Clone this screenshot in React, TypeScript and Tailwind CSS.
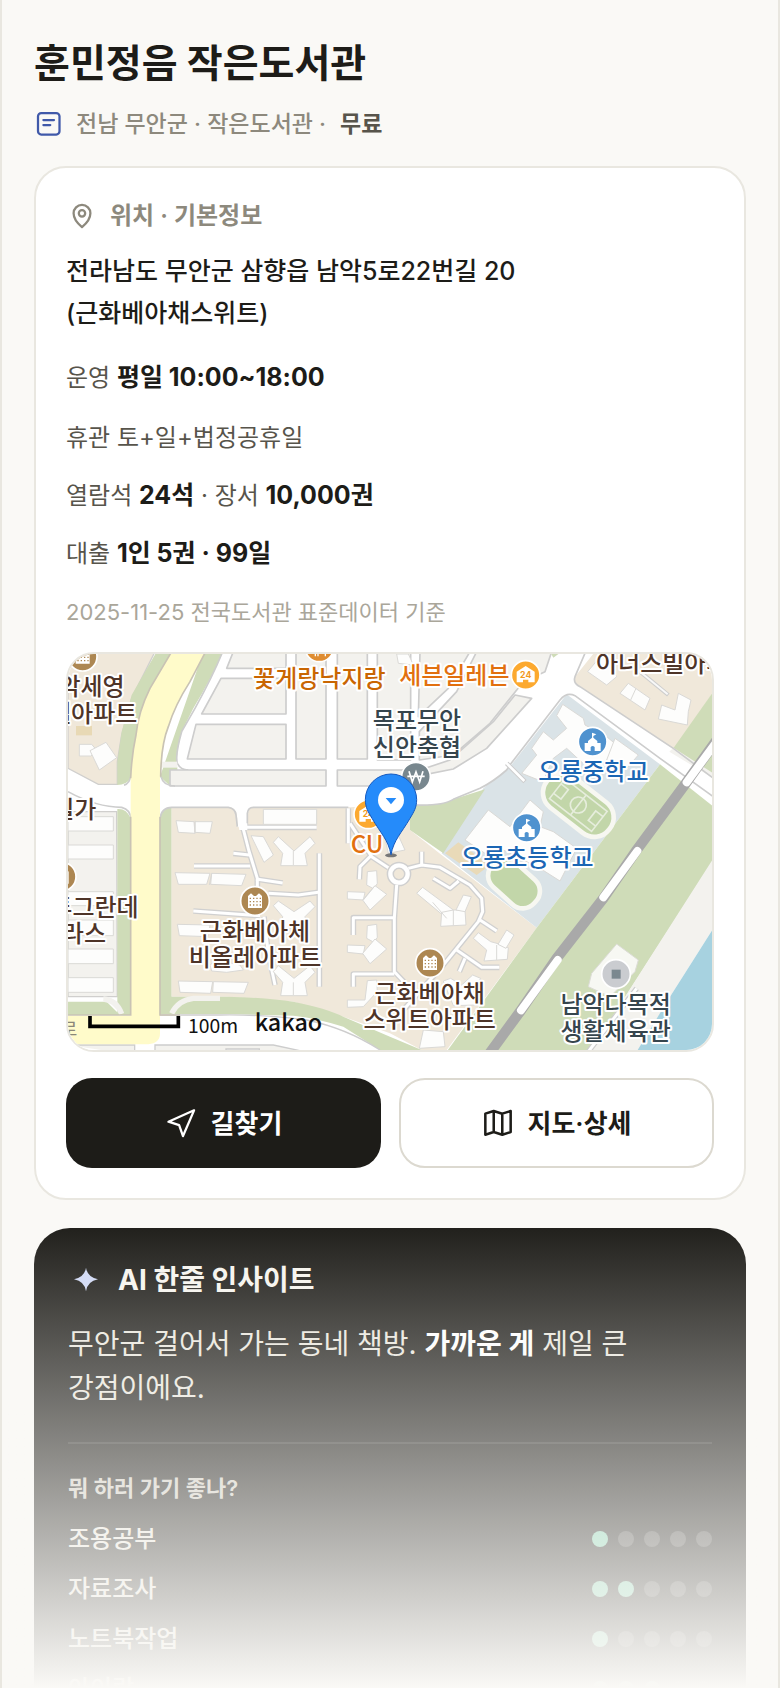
import React from "react";

type XY = { x: number; y: number };

const BLOCKS = [
  "520,20 678,20 678,70 500,70",
  "483,100 678,100 678,207 425,207",
  "408,238 678,238 678,342 382,342",
  "708,20 798,20 798,342 708,342",
  "832,20 922,20 922,342 832,342",
  "952,20 1052,20 1052,345 952,345",
  "1080,20 1230,20 1165,130 1075,215",
  "1250,20 1475,20 1455,80 1390,110 1290,235 1180,330 1078,345 1078,260 1190,140",
  "330,375 798,375 798,423 330,423",
  "832,375 1080,375 1170,345 1300,230 1365,150 1415,160 1280,310 1180,372 1080,392 1050,423 832,423",
];

const PATHS = [
  "540,547 770,547",
  "548,545 566,615 592,700 592,740",
  "520,625 568,630",
  "402,663 570,663",
  "588,702 668,714",
  "625,745 715,750 775,742",
  "778,625 778,1025",
  "400,798 600,812",
  "612,815 625,925 645,1020",
  "865,490 865,595",
  "870,535 935,635 985,668",
  "935,630 900,665 898,703",
  "1045,670 1085,660 1140,667 1230,720 1265,760 1268,800 1255,830 1150,960 1030,1095",
  "1085,660 1085,620",
  "1120,700 1170,730 1196,708",
  "1010,720 1003,820 1003,980 1060,1040",
  "1003,818 880,818 880,870",
  "1003,987 880,987 880,1025",
  "1260,825 1310,858",
  "1190,915 1265,967 1318,967",
  "1215,940 1198,980",
];

const BUILDINGS = [
  "58,298 95,298 112,318 92,333 58,333",
  "90,317 138,292 170,338 118,375",
  "24,515 160,515 160,558 24,558",
  "24,600 160,600 160,642 24,642",
  "24,740 160,740 160,782 24,782",
  "24,825 160,825 160,872 24,872",
  "24,912 160,912 160,956 24,956",
  "24,998 160,998 160,1042 24,1042",
  "348,527 402,530 405,565 355,562",
  "405,530 457,530 450,565 405,562",
  "610,493 770,493 770,538 610,538",
  "573,572 610,575 640,630 612,652",
  "640,592 655,575 702,618 750,575 765,595 735,625 742,662 662,662 668,625",
  "345,683 450,685 440,718 355,718",
  "455,685 558,688 545,722 452,718",
  "352,838 450,840 445,875 358,872",
  "640,782 655,768 702,800 750,768 765,785 735,815 742,850 662,850 668,815",
  "355,1008 458,1010 452,1045 360,1042",
  "460,1010 565,1012 552,1045 458,1042",
  "640,980 655,962 702,1000 750,962 765,982 735,1012 742,1052 662,1052 668,1012",
  "450,960 470,945 540,960 550,975 500,982 455,978",
  "922,680 950,677 952,715 942,732 920,720",
  "862,740 915,742 910,765 862,762",
  "945,722 980,748 930,795 908,765",
  "922,842 950,838 952,877 942,892 920,880",
  "862,900 915,902 910,927 862,922",
  "945,882 980,912 930,956 908,925",
  "922,1007 950,1005 952,1040 910,1085 862,1087 862,1065 915,1065",
  "1070,745 1088,727 1180,795 1160,820",
  "1145,802 1180,795 1215,795 1218,840 1142,844",
  "1210,750 1234,755 1215,800 1188,795",
  "1240,880 1255,863 1292,890 1318,897 1345,908 1342,943 1272,948 1280,915",
  "1340,855 1362,870 1338,910 1314,898",
  "1150,1008 1172,1000 1205,1020 1238,990 1262,1000 1240,1040 1250,1080 1180,1082",
  "1090,1155 1150,1160 1155,1205 1078,1210",
  "975,580 1010,560 1035,615 985,625",
  "1508,178 1570,220 1575,240 1640,275 1670,300 1665,345 1580,365 1520,310 1480,340 1448,410 1385,385 1430,330 1415,310 1450,260 1480,285 1520,250 1490,212",
  "1665,280 1735,330 1700,370 1640,345",
  "1285,495 1350,545 1380,505 1410,465 1450,500 1440,545 1480,560 1550,610 1500,708 1440,670 1300,600 1275,625 1215,585",
  "1680,145 1705,115 1770,160 1755,195",
  "1583,80 1625,30 1670,95 1640,120",
  "1855,145 1893,165 1885,200 1882,240 1795,222 1805,180 1845,195",
  "1010,27 1045,27 1060,60 1015,55",
];

function House({ x, y }: XY) {
  return (
    <g transform={`translate(${x} ${y})`}>
      <circle r="43" fill="#fca92f" stroke="#fff" strokeWidth="5" />
      <path d="M-27 -10 L0 -27 L27 -10 V22 H8 V14 H-8 V22 H-27Z" fill="#fff" />
      <text y="9" textAnchor="middle" fontSize="26" fontWeight="700" fill="#f39a1c" className="font-[Inter,sans-serif]">
        24
      </text>
    </g>
  );
}

function Apartment({ x, y }: XY) {
  return (
    <g transform={`translate(${x} ${y})`}>
      <circle r="43" fill="#ad8752" stroke="#fff" strokeWidth="5" />
      <path d="M-21 21 V-15 L-12 -23 L-3 -15 H3 L12 -23 L21 -15 V21Z" fill="#fff" />
      <path
        d="M-16 -8H18 M-16 2H18 M-16 12H18"
        stroke="#ad8752"
        strokeWidth="4"
        strokeDasharray="4 6"
      />
    </g>
  );
}

function School({ x, y }: XY) {
  return (
    <g transform={`translate(${x} ${y})`}>
      <circle r="43" fill="#4f92cf" stroke="#fff" strokeWidth="5" />
      <path
        d="M-2 -27 L11 -22 L2 -17 V-12 L14 -2 V4 H24 V28 H6 V16 Q0 10 -6 16 V28 H-24 V4 H-14 V-2 L-2 -12Z"
        fill="#fff"
      />
    </g>
  );
}

type LabelProps = XY & { color: string; anchor?: "start" | "middle" | "end"; children: string };

function Label({ x, y, color, anchor = "middle", children }: LabelProps) {
  return (
    <text
      x={x}
      y={y}
      fill={color}
      textAnchor={anchor}
      fontSize="72"
      fontWeight="500"
      stroke="#fff"
      strokeWidth="12"
      strokeLinejoin="round"
      paintOrder="stroke"
    >
      {children}
    </text>
  );
}

const BROWN = "#4e3428";
const SLATE = "#36454d";
const BLUE = "#1b66b4";

function LibraryMap() {
  return (
    <svg
      viewBox="24 27 1932 1188"
      preserveAspectRatio="xMidYMid slice"
      className="block h-full w-full font-['Noto_Sans_CJK_KR',sans-serif]"
      role="img"
      aria-label="훈민정음 작은도서관 지도"
    >
      <rect x="0" y="0" width="2000" height="1300" fill="#fff" />
      <polygon points="24,500 170,500 172,1055 24,1055" fill="#f3f2ee" stroke="#d0cfcd" strokeWidth="4" />
      <path d="M24 20H285L215 160L185 270L172 350V418H115L24 370Z" fill="#f0e8da" stroke="#d0cfcd" strokeWidth="4" />
      <rect x="48" y="243" width="48" height="28" fill="#e8d9b5" />
      <path d="M24 440Q110 487 185 487Q212 495 212 520" fill="none" stroke="#cdcdcd" strokeWidth="5" />
      <path d="M290 20H345L250 300L212 400Q200 420 172 420V350L185 260L215 150Z" fill="#cfdcb8" />
      <path d="M430 20H488Q460 90 400 190L365 260Q345 340 352 370V418H325L300 395Z" fill="#cfdcb8" />
      <path d="M172 492Q200 490 212 520V1110H172Z M300 515Q308 490 335 487V1060H300Z" fill="#cfdcb8" />
      <path d="M24 1070H140L180 1110H24Z" fill="#cfdcb8" />
      <path d="M488 20Q460 90 405 190L365 260Q345 330 352 355Q362 375 385 375" fill="none" stroke="#cdcdcd" strokeWidth="5" />
      {BLOCKS.map((points) => (
        <polygon key={points} points={points} fill="#f3f2ee" stroke="#cdcdcd" strokeWidth="5" strokeLinejoin="round" />
      ))}
      <rect x="302" y="350" width="50" height="18" fill="#f3f2ee" />
      <path d="M303 395Q310 423 345 423 M192 421Q210 415 213 390" fill="none" stroke="#cdcdcd" strokeWidth="5" />

      <path
        d="M335 487H510Q530 490 532 520V545H564V510Q564 487 580 487H865L1055 480L1050 555L1145 630L1430 848L1160 1215H1085L990 1165L850 1115L700 1070L500 1055H335Z"
        fill="#f0e8da"
      />
      <path
        d="M300 520Q305 487 335 487H505Q526 490 528 510L532 545 M562 545V505Q564 487 580 487H865"
        fill="none"
        stroke="#cdcdcd"
        strokeWidth="5"
      />
      <path
        d="M300 1055H500Q620 1058 700 1070Q800 1090 850 1115L990 1175L1085 1215H960L850 1145Q760 1118 700 1112L500 1107H300Z"
        fill="#cfdcb8"
      />
      <path d="M300 1110H480Q620 1108 740 1125Q860 1150 960 1215" fill="none" stroke="#cdcdcd" strokeWidth="4" />
      <path d="M130 1062Q170 1065 185 1107 M480 1060H400Q355 1065 335 1105" fill="none" stroke="#f3f2ee" strokeWidth="16" />
      <path d="M285 1230V1200H640L780 1230 M24 1200H224V1230" fill="#f3f2ee" stroke="#cdcdcd" strokeWidth="4" />
      <path d="M498 1230V1212H598V1230" fill="#fff" stroke="#cdcdcd" strokeWidth="4" />

      <path
        d="M335 20L270 130Q235 200 228 270Q215 330 212 400V1112H24V1198H265Q300 1195 300 1165V400Q303 300 325 245Q345 180 390 110L437 20Z"
        fill="#fffbca"
      />
      <path
        d="M335 20L270 130Q235 200 228 270Q215 330 212 400 M437 20L390 110Q345 180 325 245Q303 300 302 395 M212 515V1110H24 M300 515V1110H360"
        fill="none"
        stroke="#c9c3b4"
        strokeWidth="5"
      />

      <polygon points="1520,148 1350,365 1270,430 1145,625 1430,848 1800,358" fill="#dae3e7" />
      <path d="M1070 480Q1150 482 1180 463L1275 433L1150 625L1050 555V490Z" fill="#cfdcb8" />
      <polygon points="1800,358 1960,485 1960,645 1590,1220 1160,1220 1430,848" fill="#cfdcb8" />
      <path d="M1605 20L1545 95Q1540 115 1560 125L1845 315L1960 140V20Z" fill="#f0e8da" />
      <polygon points="1960,140 1840,310 1960,395" fill="#cfdcb8" />
      <polygon points="1960,640 1590,1220 1735,1220 1830,1055 1960,850" fill="#f3f2ee" />
      <polygon points="1960,850 1900,945 1830,1055 1730,1220 1960,1220" fill="#a7d2e0" />
      <path d="M1730 1030L1585 1220" stroke="#cdcdcd" strokeWidth="16" />
      <path d="M1730 1030L1585 1220" stroke="#fff" strokeWidth="9" />
      <path d="M1840 308L1960 385V400L1828 320Z" fill="#f3f2ee" />
      <path
        d="M1577 20L1545 95Q1538 115 1560 125L1840 310L1960 400 M1070 480Q1150 482 1180 463L1260 430Q1300 410 1340 375L1352 357L1500 165Q1520 140 1545 152L1800 340L1960 455"
        fill="none"
        stroke="#cdcdcd"
        strokeWidth="5"
      />
      <path d="M1340 355L1395 410" stroke="#cdcdcd" strokeWidth="14" />
      <path d="M1338 353L1393 408" stroke="#fff" strokeWidth="8" />
      <path d="M1740 80L1825 150" stroke="#cdcdcd" strokeWidth="12" />
      <path d="M1740 80L1823 148" stroke="#f8f8f8" strokeWidth="6" />
      <path d="M1470 20H1505L1480 38Z" fill="#cfdcb8" />

      <polygon points="1195,592 1290,660 1250,690 1155,625" fill="#e9dab8" />

      <polygon
        points="1670,897 1735,945 1725,980 1650,1055 1585,1025 1595,985"
        fill="#f7f8f3"
        stroke="#dcdcd6"
        strokeWidth="3"
      />

      <g fill="none" strokeLinejoin="round">
        {PATHS.map((points) => (
          <polyline key={points} points={points} stroke="#d0d0d0" strokeWidth="17" />
        ))}
        <circle cx="1017" cy="687" r="26" stroke="#d0d0d0" strokeWidth="22" />
        {PATHS.map((points) => (
          <polyline key={points} points={points} stroke="#fff" strokeWidth="9" />
        ))}
        <circle cx="1017" cy="687" r="26" stroke="#fff" strokeWidth="13" />
      </g>
      <path d="M534 535H562V555H538Z" fill="#fff" />

      {BUILDINGS.map((points) => (
        <polygon key={points} points={points} fill="#fdfdfc" stroke="#dad9d6" strokeWidth="3" />
      ))}
      <path
        d="M405 527V565 M455 685L448 720 M1160 820L1118 772 M1180 795V842 M1310 900V945 M700 618V660 M700 1012V1050 M910 765L945 722 M1728 130L1712 165"
        stroke="#dad9d6"
        strokeWidth="3"
      />

      <g transform="translate(1555 480) rotate(38)">
        <rect x="-118" y="-58" width="236" height="116" rx="56" fill="#c2d6a9" stroke="#f7f7f1" strokeWidth="14" />
        <path
          d="M-80 -38H80V38H-80Z M0 -38V38 M-80 -18H-52V18H-80 M80 -18H52V18H80"
          fill="none"
          stroke="#e6eddc"
          strokeWidth="5"
        />
        <circle r="24" fill="none" stroke="#e6eddc" strokeWidth="5" />
      </g>
      <g transform="translate(1362 715) rotate(42)">
        <rect x="-85" y="-50" width="170" height="100" rx="46" fill="#c2d6a9" stroke="#f7f7f1" strokeWidth="14" />
      </g>

      <path d="M1970 285L1870 425L1730 615L1630 760L1490 940L1380 1100L1285 1230" fill="none" stroke="#a9a9a9" strokeWidth="31" />
      <path
        d="M1970 290L1880 412 M1732 618L1630 757 M1493 945L1383 1096"
        fill="none"
        stroke="#fff"
        strokeWidth="24"
        strokeLinecap="round"
      />

      <Apartment x={68} y={35} />
      <Apartment x={5} y={695} />
      <Apartment x={585} y={768} />
      <Apartment x={1110} y={954} />
      <circle cx="778" cy="7" r="43" fill="#df8d32" stroke="#fff" strokeWidth="5" />
      <path d="M766 15V34 M774 15V34 M788 15H796V34" fill="none" stroke="#fff" strokeWidth="4" />
      <House x={1397} y={90} />
      <House x={925} y={508} />
      <circle cx="1068" cy="395" r="43" fill="#78878e" stroke="#fff" strokeWidth="5" />
      <path
        d="M1047 379L1057 411L1068 381L1079 411L1089 379 M1042 394H1094"
        fill="none"
        stroke="#fff"
        strokeWidth="5"
      />
      <School x={1598} y={290} />
      <School x={1400} y={548} />
      <circle cx="1668" cy="987" r="43" fill="#caccd0" stroke="#fff" strokeWidth="5" />
      <rect x="1655" y="974" width="27" height="27" fill="#7b888f" />

      <Label x={778} y={127} color="#c96602">꽃게랑낙지랑</Label>
      <Label x={1183} y={118} color="#e2700f">세븐일레븐</Label>
      <Label x={1608} y={80} color={BROWN} anchor="start">아너스빌아파트</Label>
      <Label x={194} y={150} color={BROWN} anchor="end">남악세영</Label>
      <Label x={232} y={232} color={BROWN} anchor="end">리첼아파트</Label>
      <Label x={109} y={520} color={BROWN} anchor="end">빌가</Label>
      <Label x={236} y={812} color={BROWN} anchor="end">투그란데</Label>
      <Label x={138} y={890} color={BROWN} anchor="end">테라스</Label>
      <Label x={1071} y={252} color={SLATE}>목포무안</Label>
      <Label x={1071} y={332} color={SLATE}>신안축협</Label>
      <Label x={1600} y={404} color={BLUE}>오룡중학교</Label>
      <Label x={1402} y={664} color={BLUE}>오룡초등학교</Label>
      <Label x={921} y={624} color="#e2700f">CU</Label>
      <Label x={585} y={885} color={BROWN}>근화베아체</Label>
      <Label x={585} y={963} color={BROWN}>비올레아파트</Label>
      <Label x={1109} y={1071} color={BROWN}>근화베아채</Label>
      <Label x={1109} y={1150} color={BROWN}>스위트아파트</Label>
      <Label x={1667} y={1104} color={SLATE}>남악다목적</Label>
      <Label x={1667} y={1184} color={SLATE}>생활체육관</Label>
      <text x="52" y="1172" textAnchor="end" fontSize="54" fill="#8b8778">남악로</text>

      <ellipse cx="993" cy="631" rx="18" ry="6" fill="#777" />
      <path
        d="M993 629C985 585 962 565 936 520C924 500 916 487 916 464A77 77 0 0 1 1070 464C1070 487 1062 500 1050 520C1024 565 1001 585 993 629Z"
        fill="#258bfa"
        stroke="#1459c0"
        strokeWidth="3"
      />
      <circle cx="993" cy="465" r="39" fill="#fff" />
      <path d="M977 459H1009L993 478Z" fill="#258bfa" />

      <path d="M90 1113V1144H355V1113" fill="none" stroke="#000" strokeWidth="11" />
      <text x="384" y="1165" fontSize="58" fill="#111">100m</text>
      <text x="584" y="1159" fontSize="70" fontWeight="500" fill="#111">kakao</text>
    </svg>
  );
}

function Icon({ className, children }: { className: string; children: React.ReactNode }) {
  return (
    <svg
      viewBox="0 0 24 24"
      fill="none"
      stroke="currentColor"
      strokeLinecap="round"
      strokeLinejoin="round"
      aria-hidden="true"
      className={className}
    >
      {children}
    </svg>
  );
}

function Value({ children }: { children: React.ReactNode }) {
  return <b className="text-[25px] leading-none font-bold text-[#1d1c18]">{children}</b>;
}

const ACTIVITIES = [
  { name: "조용공부", score: 1 },
  { name: "자료조사", score: 2 },
  { name: "노트북작업", score: 1 },
  { name: "아이랑", score: 3 },
];

export default function App() {
  return (
    <div className="relative h-screen overflow-hidden border-x-2 border-[#e9e7e0] bg-[#faf9f6] px-8 font-[Inter,'Noto_Sans_CJK_KR',sans-serif] text-[#1d1c18]">
      <header className="pt-9">
        <h1 className="text-[39px] leading-[54px] font-bold">훈민정음 작은도서관</h1>
        <div className="mt-3 flex h-11 items-center text-[23px] font-medium text-[#8d897d]">
          <Icon className="mr-3 h-[30px] w-[30px] text-[#4059a9]">
            <rect x="3.2" y="3.2" width="17.2" height="17.2" rx="2.6" strokeWidth="1.8" />
            <path d="M7.5 8.8h8.5M7.5 12.8h5.5" strokeWidth="1.8" />
          </Icon>
          <span>전남 무안군 · 작은도서관 ·</span>
          <strong className="ml-[14px] font-semibold text-[#57544b]">무료</strong>
        </div>
      </header>

      <section className="mt-5 rounded-[32px] border-2 border-[#e9e7e0] bg-white px-[30px] pt-7 pb-[30px]">
        <h2 className="flex h-10 items-center text-[24px] font-semibold text-[#8d897d]">
          <Icon className="mr-3 h-8 w-8">
            <path d="M12 20.4C8.5 17.5 5.7 14.3 5.7 10A6.3 6.3 0 0 1 18.3 10C18.3 14.3 15.5 17.5 12 20.4Z" strokeWidth="1.7" />
            <circle cx="12" cy="10" r="2.4" strokeWidth="1.7" />
          </Icon>
          위치 · 기본정보
        </h2>
        <p className="mt-[14px] text-[25px] leading-[42px] font-medium">
          전라남도 무안군 삼향읍 남악5로22번길 20
          <br />
          (근화베아채스위트)
        </p>
        <div className="mt-[26px] flex flex-col gap-[22px] text-[24px] leading-9 text-[#57544b]">
          <p className="pb-[2px]">
            운영 <Value>평일 10:00~18:00</Value>
          </p>
          <p>휴관 토+일+법정공휴일</p>
          <p>
            열람석 <Value>24석</Value> · 장서 <Value>10,000권</Value>
          </p>
          <p>
            대출 <Value>1인 5권 · 99일</Value>
          </p>
          <p className="text-[22px] text-[#aaa69a]">2025-11-25 전국도서관 표준데이터 기준</p>
        </div>

        <div className="mt-[22px] h-[400px] overflow-hidden rounded-[28px] border-2 border-[#e9e7e0]">
          <LibraryMap />
        </div>

        <div className="mt-[26px] grid grid-cols-2 gap-[18px] text-[26px] font-semibold">
          <button type="button" className="flex h-[90px] items-center justify-center gap-[14px] rounded-[26px] bg-[#1d1c18] text-white">
            <Icon className="h-8 w-8">
              <path d="M21.8 2.5L2.6 11L10.6 13.6L13.5 21.8Z" strokeWidth="1.7" />
            </Icon>
            길찾기
          </button>
          <button
            type="button"
            className="flex h-[90px] items-center justify-center gap-[14px] rounded-[26px] border-2 border-[#dcd9d0] bg-white"
          >
            <Icon className="h-8 w-8">
              <path d="M2.5 5L8.8 3L15.2 5L21.5 3V18.8L15.2 20.8L8.8 18.8L2.5 20.8Z M8.8 3V18.8 M15.2 5V20.8" strokeWidth="1.9" />
            </Icon>
            지도·상세
          </button>
        </div>
      </section>

      <section className="mt-7 rounded-t-[36px] bg-[#1d1c18] px-[34px] pt-[30px] pb-8">
        <h2 className="flex h-11 items-center text-[28px] font-bold text-[#f6f4ee]">
          <svg viewBox="0 0 24 24" aria-hidden="true" className="mr-[14px] h-9 w-9 text-[#cfd8f5]">
            <path d="M12 3.8Q13 10.2 20 11.5Q13 12.8 12 19.5Q11 12.8 4 11.5Q11 10.2 12 3.8Z" fill="currentColor" />
          </svg>
          AI 한줄 인사이트
        </h2>
        <p className="mt-5 text-[28px] leading-[44px] text-[#e9e6dd]">
          무안군 걸어서 가는 동네 책방. <b className="font-bold text-white">가까운 게</b> 제일 큰
          <br />
          강점이에요.
        </p>
        <div className="mt-8 border-t-2 border-white/10 pt-7">
          <h3 className="text-[22px] leading-8 font-semibold text-[#cfccc2]">뭐 하러 가기 좋나?</h3>
          <ul className="mt-[10px] text-[24px] leading-[50px] font-medium text-[#e9e6dd]">
            {ACTIVITIES.map((item) => (
              <li key={item.name} className="flex items-center justify-between">
                {item.name}
                <span className="flex gap-[10px]" role="img" aria-label={`5점 중 ${item.score}점`}>
                  {[1, 2, 3, 4, 5].map((n) => (
                    <span
                      key={n}
                      className={n <= item.score ? "h-4 w-4 rounded-full bg-[#7fd0ae]" : "h-4 w-4 rounded-full bg-white/20"}
                    />
                  ))}
                </span>
              </li>
            ))}
          </ul>
        </div>
      </section>

      <div className="pointer-events-none absolute inset-x-0 bottom-0 h-[470px] bg-linear-to-b from-[#faf9f6]/0 to-[#faf9f6]" />
    </div>
  );
}
